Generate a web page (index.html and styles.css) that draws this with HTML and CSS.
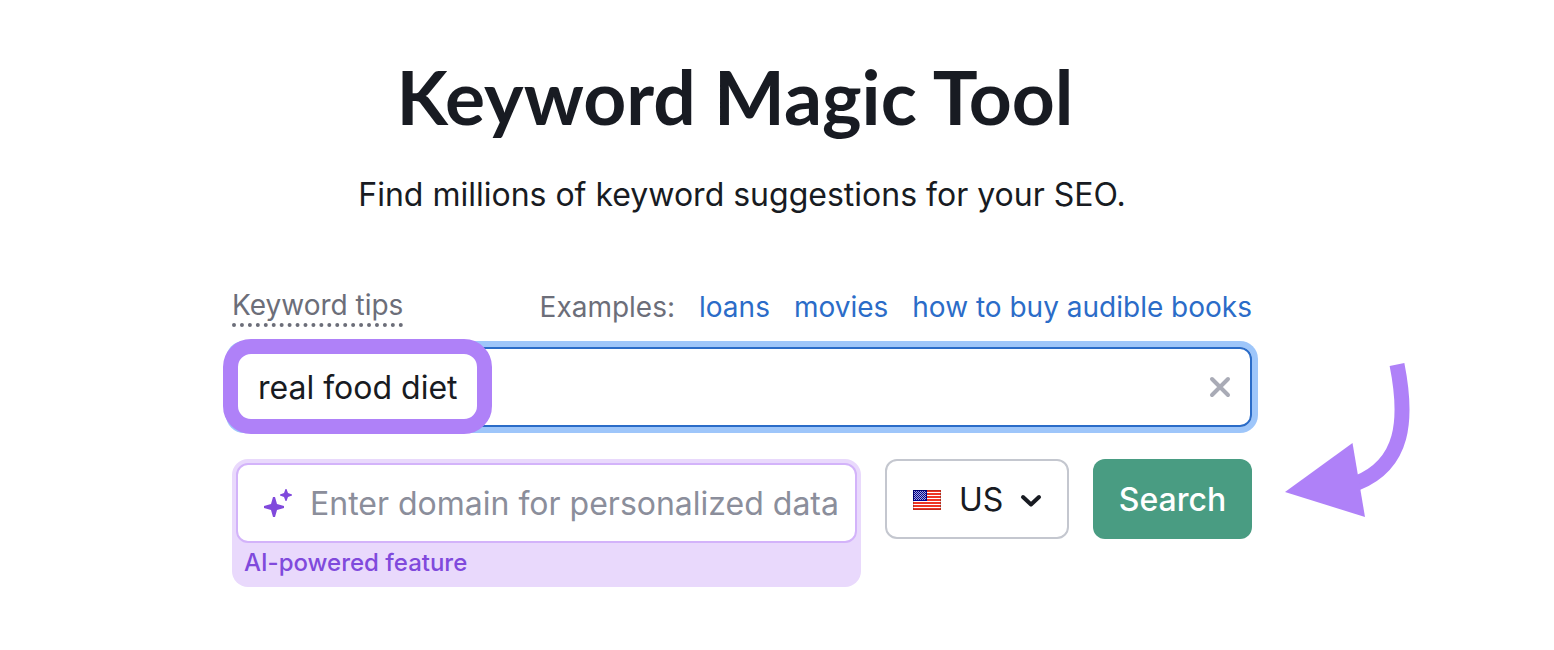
FILE: index.html
```html
<!DOCTYPE html>
<html lang="en">

<head>
    <meta charset="UTF-8">
    <meta name="viewport" content="width=device-width, initial-scale=1.0">
    <title>Keyword Magic Tool</title>
    <link rel="stylesheet" href="styles.css">
</head>

<body>
    <main class="page">
        <h1 class="title">Keyword Magic Tool</h1>
        <p class="subtitle">Find millions of keyword suggestions for your SEO.</p>

        <form class="search" action="#">
            <div class="hints">
                <a class="tips" href="#">Keyword tips</a>
                <div class="examples">
                    <span>Examples:</span>
                    <a href="#">loans</a>
                    <a href="#">movies</a>
                    <a href="#">how to buy audible books</a>
                </div>
            </div>

            <div class="keyword">
                <input class="keyword-input" type="text" name="keyword" value="real food diet" aria-label="Keyword">
                <button class="clear" type="reset" aria-label="Clear">
                    <svg width="24" height="24" viewBox="0 0 24 24">
                        <path d="M4 4L20 20M20 4L4 20" fill="none" stroke="#a9abb6" stroke-width="4" stroke-linecap="round" />
                    </svg>
                </button>
                <span class="highlight"></span>
            </div>

            <div class="controls">
                <div class="ai">
                    <div class="ai-field">
                        <svg width="30" height="30" viewBox="0 0 30 30">
                            <path fill="#8049dc" d="M11 9H13L15 16L22 18V20L15 22L13 29H11L9 22L2 20V18L9 16Z" />
                            <path fill="#8049dc" d="M23.500 1H24.500L26 5L30 6.500V7.500L26 9L24.500 13H23.500L22 9L18 7.500V6.500L22 5Z" />
                        </svg>
                        <input class="ai-input" id="domain" type="text" name="domain" placeholder="Enter domain for personalized data">
                    </div>
                    <label class="ai-label" for="domain">AI-powered feature</label>
                </div>

                <div class="country">
                    <svg class="flag" width="28" height="20" viewBox="0 0 28 20">
                        <defs>
                            <pattern id="stars" width="2" height="2" patternUnits="userSpaceOnUse">
                                <path fill="#a9a9dc" d="M0 0h1v1H0zM1 1h1v1H1z" />
                            </pattern>
                        </defs>
                        <path fill="#fff" d="M0 0h28v20H0z" />
                        <path fill="#ee3524" d="M0 0h28v2H0zM0 3h28v2H0zM0 6h28v2H0zM0 9h28v2H0zM0 12h28v2H0zM0 15h28v2H0zM0 18h28v2H0z" />
                        <path fill="#00008f" d="M0 0h14v11H0z" />
                        <path fill="url(#stars)" d="M1 1h12v9H1z" />
                        <path fill="none" stroke="#000" stroke-opacity=".2" d="M.5.5h27v19H.5z" />
                    </svg>
                    <select class="country-select" name="country" aria-label="Country">
                        <option>US</option>
                    </select>
                    <svg class="chevron" width="24" height="16" viewBox="0 0 24 16">
                        <path d="M4 4L12 11.500L20 4" fill="none" stroke="#181b22" stroke-width="4" stroke-linecap="round" stroke-linejoin="round" />
                    </svg>
                </div>

                <div class="submit">
                    <button class="submit-button" type="submit">Search</button>
                    <svg class="arrow" width="128" height="156" viewBox="0 0 128 156">
                        <path d="M112 2.500C123 58 119 102 72 121" fill="none" stroke="#af81f8" stroke-width="15" />
                        <path d="M0 130L67.500 81L80 155Z" fill="#af81f8" />
                    </svg>
                </div>
            </div>
        </form>
    </main>
</body>

</html>
```
FILE: styles.css
```css
* {
    box-sizing: border-box;
}

body {
    margin: 0;
    background: #fff;
    color: #181b22;
    font-family: Inter, "Liberation Sans", sans-serif;
}

.page {
    max-width: 1090px;
    margin: 0 auto;
    padding: 52px 70px 48px 0;
}

.title {
    margin: 0;
    padding-right: 14px;
    font-family: Lato, Inter, sans-serif;
    font-size: 75px;
    line-height: 88px;
    font-weight: 700;
    text-align: center;
}

.subtitle {
    margin: 33px 0 0;
    font-size: 32px;
    line-height: 44px;
    text-align: center;
}

.search {
    margin-top: 70px;
}

.hints {
    display: flex;
    justify-content: space-between;
    align-items: center;
    margin-bottom: 20px;
    color: #6c6e79;
    font-size: 28px;
    line-height: 36px;
}

.tips {
    color: #6c6e79;
    border-bottom: 4px dotted #6c6e79;
    text-decoration: none;
}

.examples {
    display: flex;
    gap: 24px;
}

.examples a {
    color: #2b6cc8;
    text-decoration: none;
}

.keyword {
    position: relative;
    display: flex;
    align-items: center;
    height: 80px;
    padding: 0 18px 0 24px;
    border: 2px solid #2b6cc8;
    border-radius: 12px;
    box-shadow: 0 0 0 6px #9ec6fa;
}

.keyword-input {
    flex: 1;
    min-width: 0;
    padding: 0;
    border: 0;
    outline: 0;
    background: none;
    color: inherit;
    font: inherit;
    font-size: 32px;
}

.clear {
    display: flex;
    padding: 0;
    border: 0;
    background: none;
    cursor: pointer;
}

/* purple ring around the typed keyword */
.highlight {
    position: absolute;
    top: -10px;
    left: -11px;
    width: 269px;
    height: 95px;
    border: 15px solid #af81f8;
    border-radius: 28px;
    pointer-events: none;
}

.controls {
    display: flex;
    align-items: flex-start;
    gap: 24px;
    margin-top: 32px;
}

.ai {
    flex: 1;
    min-width: 0;
    padding: 4px;
    border-radius: 16px;
    background: #e9d9fc;
}

.ai-field {
    display: flex;
    align-items: center;
    gap: 18px;
    height: 80px;
    padding: 0 12px 0 24px;
    border: 2px solid #d3b3fa;
    border-radius: 12px;
    background: #fff;
}

.ai-input {
    flex: 1;
    min-width: 0;
    padding: 0;
    border: 0;
    outline: 0;
    color: inherit;
    font: inherit;
    font-size: 32px;
}

.ai-input::placeholder {
    color: #8b8e9b;
    opacity: 1;
}

.ai-label {
    display: block;
    padding: 4px 8px;
    color: #8049dc;
    font-size: 24px;
    line-height: 32px;
    font-weight: 500;
}

.country {
    position: relative;
}

.country-select {
    appearance: none;
    width: 184px;
    height: 80px;
    padding: 0 64px 0 72px;
    border: 2px solid #c4c7cf;
    border-radius: 12px;
    background: #fff;
    color: inherit;
    font: inherit;
    font-size: 32px;
}

.flag,
.chevron {
    position: absolute;
    pointer-events: none;
}

.flag {
    top: 31px;
    left: 28px;
}

.chevron {
    top: 34px;
    right: 26px;
}

.submit {
    position: relative;
}

.submit-button {
    width: 159px;
    height: 80px;
    padding: 0;
    border: 0;
    border-radius: 12px;
    background: #499c82;
    color: #fff;
    font: inherit;
    font-size: 32px;
    font-weight: 500;
    cursor: pointer;
}

.arrow {
    position: absolute;
    top: -97px;
    left: 192px;
}
```
